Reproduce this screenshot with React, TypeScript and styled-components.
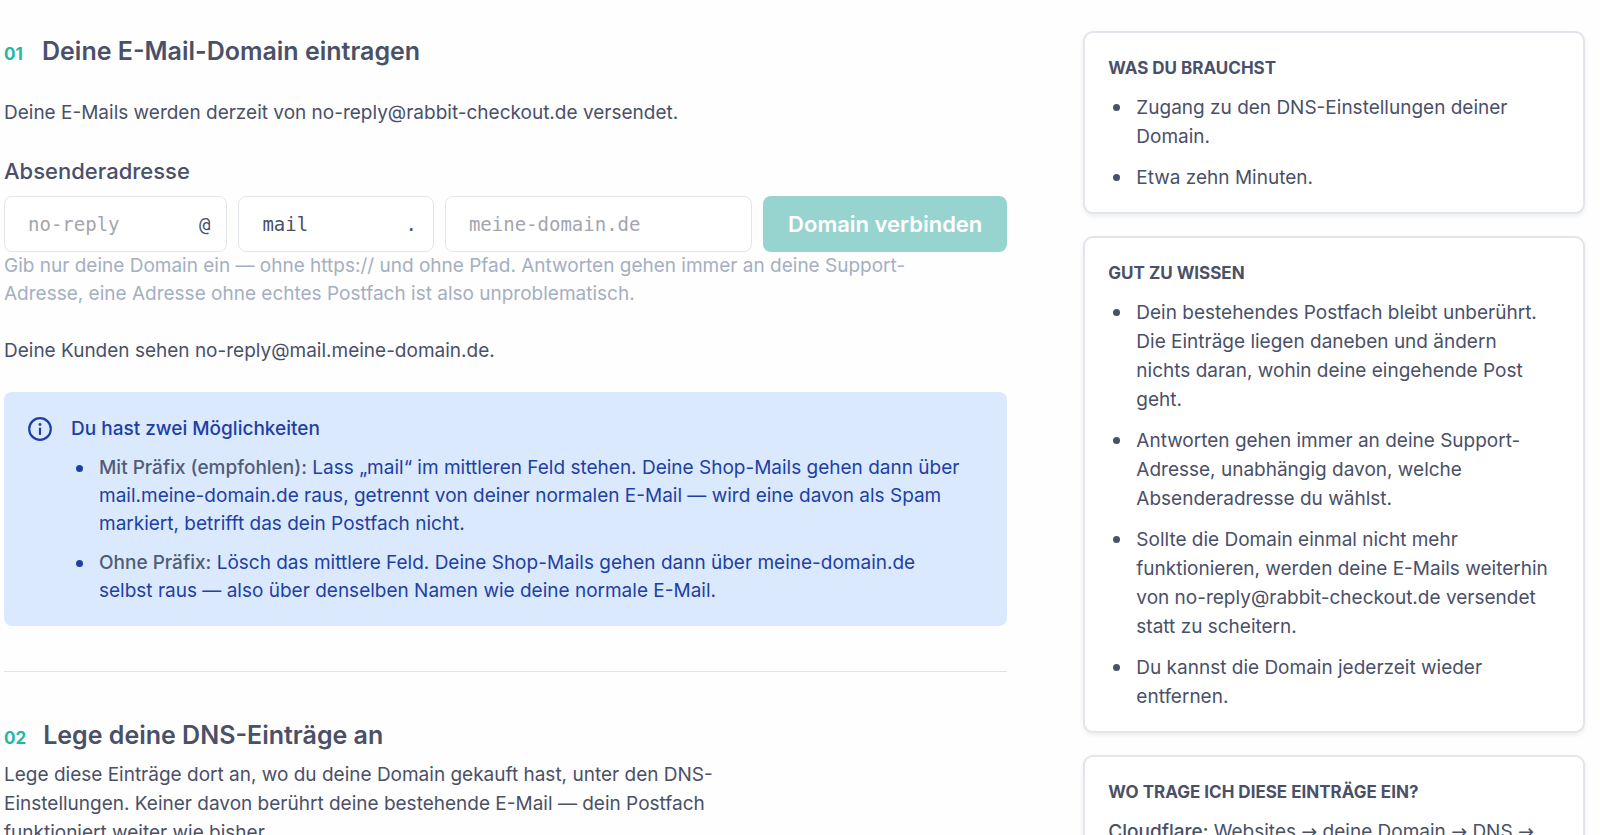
import React from "react";
import styled, { createGlobalStyle } from "styled-components";

const ink = "#4a5068";
const blue = "#1e40a3";

const GlobalStyle = createGlobalStyle`
  *, *::before, *::after { box-sizing: border-box; }
  html, body, #root { height: 100%; }
  body {
    margin: 0;
    overflow: hidden;
    background: #fefefe;
    color: ${ink};
    font-family: Inter, "Liberation Sans", sans-serif;
    font-size: 19px;
    line-height: 29px;
  }
  h2, h3, p, ul { margin: 0; }
  input, button { font: inherit; color: inherit; }
`;

const Page = styled.div`
  display: grid;
  grid-template-columns: 2fr 1fr;
  align-items: start;
  gap: 76px;
  padding: 31px 15px 0 4px;
`;

const Main = styled.main`
  display: flex;
  flex-direction: column;
  min-width: 0;
  padding-top: 1px;
`;

const Step = styled.section`
  display: flex;
  flex-direction: column;
  & + & {
    margin-top: 45px;
    padding-top: 44px;
    border-top: 1px solid #dfe3e7;
  }
`;

const StepHeader = styled.header`
  display: flex;
  align-items: baseline;
  gap: 17px;
  line-height: 38px;
`;

const StepNumber = styled.span`
  min-width: 21px;
  color: #1fb8a2;
  font-size: 17px;
  font-weight: 700;
`;

const StepTitle = styled.h2`
  font-size: 25px;
  font-weight: 600;
`;

const Current = styled.p`
  margin-top: 25px;
`;

const Intro = styled.p`
  max-width: 740px;
  margin-top: 3px;
`;

const Form = styled.form`
  display: flex;
  flex-direction: column;
  margin-top: 28px;
`;

const Label = styled.label`
  font-size: 22px;
  font-weight: 500;
  line-height: 33px;
`;

const Fields = styled.div`
  display: grid;
  grid-template-columns: 8fr 7fr 11fr auto;
  gap: 11px;
  margin-top: 8px;
`;

const Field = styled.div`
  display: flex;
  align-items: center;
  min-width: 0;
  height: 56px;
  padding: 0 16px 0 23px;
  border: 1px solid #e2e5ea;
  border-radius: 8px;
  background: #fff;
  font-family: "DejaVu Sans Mono", monospace;
`;

const Input = styled.input`
  flex: 1;
  width: 0;
  min-width: 0;
  padding: 0;
  border: 0;
  outline: 0;
  background: transparent;
  &::placeholder { color: #a3a6ae; opacity: 1; }
`;

const Connect = styled.button`
  height: 56px;
  padding: 0 25px;
  border: 0;
  border-radius: 8px;
  background: #98d4cf;
  color: #fff;
  font-size: 22px;
  font-weight: 600;
`;

const Hint = styled.p`
  max-width: 960px;
  color: #a5afc1;
  line-height: 28px;
`;

const Preview = styled.p`
  margin-top: 28px;
`;

const Notice = styled.aside`
  display: flex;
  gap: 18px;
  margin-top: 27px;
  padding: 23px 36px 21px 23px;
  border-radius: 8px;
  background: #dbe9fe;
  color: ${blue};
  line-height: 28px;
`;

const InfoIcon = styled.svg`
  flex: none;
  width: 26px;
  height: 28px;
`;

const NoticeTitle = styled.h3`
  font-size: 19px;
  font-weight: 500;
`;

const List = styled.ul`
  display: flex;
  flex-direction: column;
  gap: 11px;
  margin-top: 11px;
  padding: 0 0 0 5px;
  list-style: none;
`;

const Entry = styled.li`
  display: flex;
  gap: 16px;
  &::before {
    content: "";
    flex: none;
    width: 7px;
    height: 7px;
    margin-top: 11px;
    border-radius: 50%;
    background: currentColor;
  }
`;

const Term = styled.strong<{ $tone?: string }>`
  color: ${(p) => p.$tone ?? "inherit"};
  font-weight: 500;
`;

const Sidebar = styled.aside`
  display: flex;
  flex-direction: column;
  gap: 22px;
`;

const Card = styled.section`
  padding: 21px 32px 20px 23px;
  border: 2px solid #e2e5ea;
  border-radius: 10px;
  background: #fff;
  box-shadow: 0 2px 4px rgba(30, 40, 60, 0.08);
  ${List} {
    gap: 12px;
    margin-top: 10px;
  }
`;

const CardTitle = styled.h3`
  font-size: 17px;
  font-weight: 700;
  line-height: 29px;
  text-transform: uppercase;
`;

const CardText = styled.p`
  margin-top: 10px;
`;

const Arrow = styled.span`
  font-family: "DejaVu Sans", sans-serif;
  line-height: 1;
`;

function Item({ children }: { children: React.ReactNode }) {
  return (
    <Entry>
      <span>{children}</span>
    </Entry>
  );
}

export default function App() {
  return (
    <>
      <GlobalStyle />
      <Page>
        <Main>
          <Step>
            <StepHeader>
              <StepNumber>01</StepNumber>
              <StepTitle>Deine E-Mail-Domain eintragen</StepTitle>
            </StepHeader>
            <Current>Deine E-Mails werden derzeit von no-reply@rabbit-checkout.de versendet.</Current>
            <Form onSubmit={(e) => e.preventDefault()}>
              <Label htmlFor="sender">Absenderadresse</Label>
              <Fields>
                <Field>
                  <Input id="sender" placeholder="no-reply" />
                  <span>@</span>
                </Field>
                <Field>
                  <Input aria-label="Präfix" defaultValue="mail" />
                  <span>.</span>
                </Field>
                <Field>
                  <Input aria-label="Domain" placeholder="meine-domain.de" />
                </Field>
                <Connect type="submit" disabled>Domain verbinden</Connect>
              </Fields>
              <Hint>
                Gib nur deine Domain ein — ohne https:// und ohne Pfad. Antworten gehen immer an deine
                Support-Adresse, eine Adresse ohne echtes Postfach ist also unproblematisch.
              </Hint>
            </Form>
            <Preview>Deine Kunden sehen no-reply@mail.meine-domain.de.</Preview>
            <Notice>
              <InfoIcon viewBox="0 0 26 28" fill="none" stroke="currentColor" strokeWidth="2.2" aria-hidden="true">
                <circle cx="13" cy="14" r="10.8" />
                <path d="M13 12.7v7.2" />
                <circle cx="13" cy="9.5" r="1.4" fill="currentColor" stroke="none" />
              </InfoIcon>
              <div>
                <NoticeTitle>Du hast zwei Möglichkeiten</NoticeTitle>
                <List>
                  <Item>
                    <Term $tone="#4f5d75">Mit Präfix (empfohlen):</Term> Lass „mail“ im mittleren Feld stehen.
                    Deine Shop-Mails gehen dann über mail.meine-domain.de raus, getrennt von deiner normalen
                    E-Mail — wird eine davon als Spam markiert, betrifft das dein Postfach nicht.
                  </Item>
                  <Item>
                    <Term $tone="#4f5d75">Ohne Präfix:</Term> Lösch das mittlere Feld. Deine Shop-Mails gehen
                    dann über meine-domain.de selbst raus — also über denselben Namen wie deine normale E-Mail.
                  </Item>
                </List>
              </div>
            </Notice>
          </Step>
          <Step>
            <StepHeader>
              <StepNumber>02</StepNumber>
              <StepTitle>Lege deine DNS-Einträge an</StepTitle>
            </StepHeader>
            <Intro>
              Lege diese Einträge dort an, wo du deine Domain gekauft hast, unter den DNS-Einstellungen.
              Keiner davon berührt deine bestehende E-Mail — dein Postfach funktioniert weiter wie bisher.
            </Intro>
          </Step>
        </Main>
        <Sidebar>
          <Card>
            <CardTitle>Was du brauchst</CardTitle>
            <List>
              <Item>Zugang zu den DNS-Einstellungen deiner Domain.</Item>
              <Item>Etwa zehn Minuten.</Item>
            </List>
          </Card>
          <Card>
            <CardTitle>Gut zu wissen</CardTitle>
            <List>
              <Item>
                Dein bestehendes Postfach bleibt unberührt. Die Einträge liegen daneben und ändern nichts
                daran, wohin deine eingehende Post geht.
              </Item>
              <Item>
                Antworten gehen immer an deine Support-Adresse, unabhängig davon, welche Absenderadresse du
                wählst.
              </Item>
              <Item>
                Sollte die Domain einmal nicht mehr funktionieren, werden deine E-Mails weiterhin von
                no-reply@rabbit-checkout.de versendet statt zu scheitern.
              </Item>
              <Item>Du kannst die Domain jederzeit wieder entfernen.</Item>
            </List>
          </Card>
          <Card>
            <CardTitle>Wo trage ich diese Einträge ein?</CardTitle>
            <CardText>
              <Term>Cloudflare:</Term> Websites <Arrow>→</Arrow> deine Domain <Arrow>→</Arrow> DNS{" "}
              <Arrow>→</Arrow>
            </CardText>
          </Card>
        </Sidebar>
      </Page>
    </>
  );
}
